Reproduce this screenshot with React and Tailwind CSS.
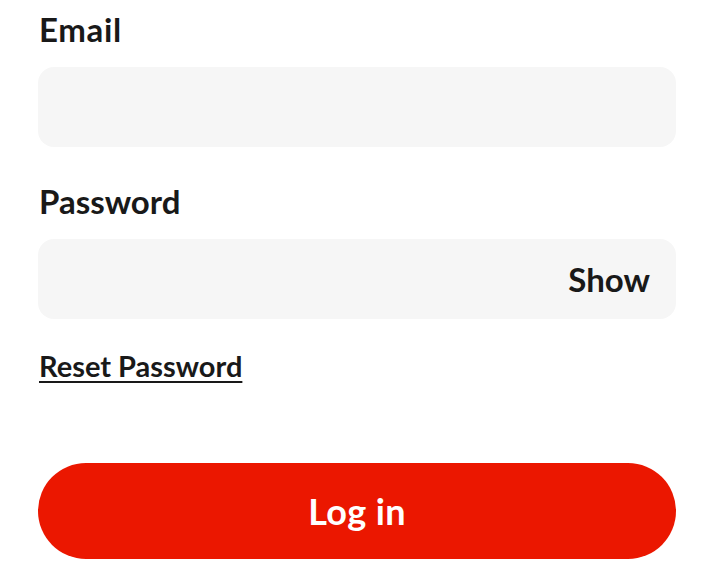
import React, { useState } from 'react';

export default function App() {
  const [showPassword, setShowPassword] = useState(false);

  return (
    <div className="min-h-screen bg-white pl-[38px] pr-[48px] pt-[9px] text-[#191919] font-['Lato','Noto_Sans',sans-serif]">
      <form className="flex flex-col" onSubmit={(e) => e.preventDefault()}>
        {/* Email */}
        <label htmlFor="email" className="pl-px text-[33px] leading-[40px] font-bold tracking-[0.02em]">Email</label>
        <input
          id="email"
          type="email"
          className="mt-[18px] h-[80px] w-full rounded-[16px] bg-[#f6f6f6] px-6 text-[28px] outline-none"
        />

        {/* Password */}
        <label htmlFor="password" className="mt-[34px] pl-px text-[33px] leading-[40px] font-bold">Password</label>
        <div className="mt-[18px] flex h-[80px] w-full items-center rounded-[16px] bg-[#f6f6f6] pl-6 pr-[26px]">
          <input
            id="password"
            type={showPassword ? 'text' : 'password'}
            className="h-full flex-1 bg-transparent text-[28px] outline-none"
          />
          <button
            type="button"
            onClick={() => setShowPassword((v) => !v)}
            className="text-[33px] leading-[40px] font-bold"
          >
            {showPassword ? 'Hide' : 'Show'}
          </button>
        </div>

        <div className="mt-[29px]">
          <a href="#" className="pl-px text-[29px] leading-[36px] font-bold underline underline-offset-[4px] decoration-2">
            Reset Password
          </a>
        </div>

        <button
          type="submit"
          className="mt-[79px] h-[96px] w-full rounded-full bg-[#eb1700] text-[36px] font-bold tracking-[0.01em] text-white"
        >
          Log in
        </button>
      </form>
    </div>
  );
}
